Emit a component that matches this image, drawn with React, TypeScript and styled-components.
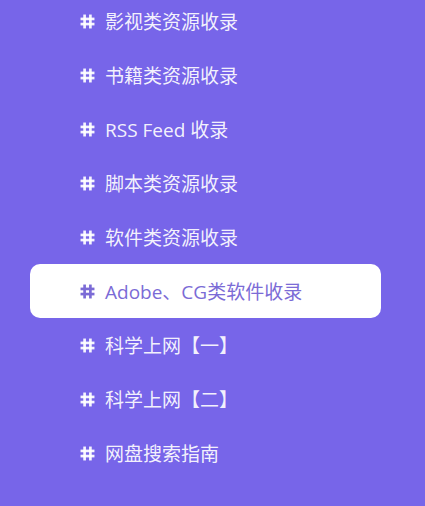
import React from "react";
import styled, { createGlobalStyle } from "styled-components";

const GlobalStyle = createGlobalStyle`
  html, body {
    margin: 0;
    padding: 0;
    background: #7765e9;
  }
`;

const Page = styled.div`
  width: 425px;
  height: 506px;
  overflow: hidden;
  background: #7765e9;
`;

const List = styled.ul`
  list-style: none;
  margin: -6px 44px 0 30px;
  padding: 0;
`;

const Item = styled.li<{ $active?: boolean }>`
  display: flex;
  align-items: center;
  gap: 10px;
  height: 54px;
  padding-left: 50px;
  border-radius: 10px;
  background: ${(p) => (p.$active ? "#ffffff" : "transparent")};
  color: ${(p) => (p.$active ? "#7b6bd6" : "rgba(255, 255, 255, 0.93)")};
  font-family: "Open Sans", "Noto Sans CJK SC", sans-serif;
  font-size: 19px;
  cursor: pointer;
`;

const Hash = styled.svg`
  width: 15px;
  height: 15px;
  flex-shrink: 0;
`;

const HashIcon: React.FC = () => (
  <Hash viewBox="0 0 14 14">
    <g stroke="currentColor" strokeWidth="2.5" strokeLinecap="butt">
      <line x1="4.3" y1="0.5" x2="4.3" y2="13.5" />
      <line x1="9.7" y1="0.5" x2="9.7" y2="13.5" />
      <line x1="0.5" y1="4.6" x2="13.5" y2="4.6" />
      <line x1="0.5" y1="9.4" x2="13.5" y2="9.4" />
    </g>
  </Hash>
);

const entries = [
  "影视类资源收录",
  "书籍类资源收录",
  "RSS Feed 收录",
  "脚本类资源收录",
  "软件类资源收录",
  "Adobe、CG类软件收录",
  "科学上网【一】",
  "科学上网【二】",
  "网盘搜索指南",
];

const App: React.FC = () => {
  return (
    <Page>
      <GlobalStyle />
      <List>
        {entries.map((label, i) => (
          <Item key={label} $active={i === 5}>
            <HashIcon />
            <span>{label}</span>
          </Item>
        ))}
      </List>
    </Page>
  );
};

export default App;
